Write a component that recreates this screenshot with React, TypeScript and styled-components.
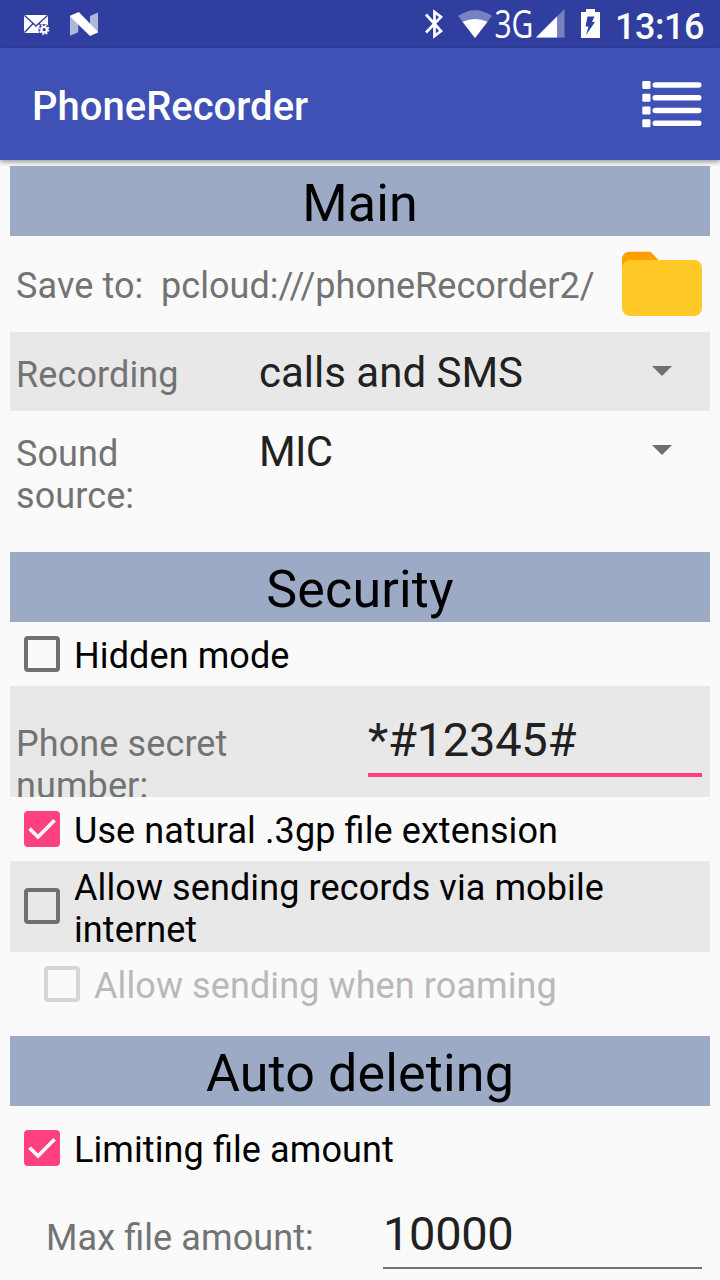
import React from "react";
import styled, { createGlobalStyle } from "styled-components";

const GlobalStyle = createGlobalStyle`
  *, *::before, *::after { box-sizing: border-box; }
  html, body { margin: 0; padding: 0; background: #fafafa; }
  body {
    font-family: Roboto, "Liberation Sans", sans-serif;
    font-feature-settings: "liga" 1;
    overflow: hidden;
  }
`;

const Screen = styled.div`
  display: flex;
  flex-direction: column;
  width: 720px;
  height: 1280px;
  overflow: hidden;
  background: #fafafa;
  color: #000;
`;

const StatusBar = styled.div`
  flex: none;
  display: flex;
  align-items: flex-start;
  justify-content: space-between;
  height: 48px;
  background: #303f9f;
  color: #fff;
`;

const StatusIcon = styled.svg`
  display: block;
  flex: none;
  overflow: visible;
`;

const Clock = styled.time`
  width: 105px;
  padding-top: 6px;
  font-size: 36px;
  font-weight: 500;
  line-height: 42px;
  letter-spacing: -0.5px;
  white-space: nowrap;
`;

const AppBar = styled.header`
  flex: none;
  position: relative;
  display: flex;
  align-items: center;
  justify-content: space-between;
  height: 112px;
  padding: 0 16px 0 32px;
  background: #3f51b5;
  box-shadow: 0 2px 5px rgba(0, 0, 0, 0.4);
`;

const Title = styled.h1`
  margin: 0;
  padding-top: 6px;
  font-size: 40px;
  font-weight: 500;
  line-height: 46px;
  color: #fff;
`;

const MenuIcon = styled.svg`
  display: block;
`;

const Content = styled.main`
  flex: none;
  display: flex;
  flex-direction: column;
  padding: 6px 10px 0;
`;

const SectionHeader = styled.h2`
  flex: none;
  height: 70px;
  margin: 0;
  padding-top: 7px;
  background: #9caac6;
  font-size: 52px;
  font-weight: 400;
  line-height: 61px;
  letter-spacing: 0.15px;
  text-align: center;
`;

const Row = styled.div<{ $height: number; $top: number; $shaded?: boolean; $left?: number }>`
  flex: none;
  display: flex;
  align-items: flex-start;
  height: ${(p) => p.$height}px;
  padding-top: ${(p) => p.$top}px;
  padding-left: ${(p) => p.$left ?? 6}px;
  padding-right: 8px;
  overflow: hidden;
  background: ${(p) => (p.$shaded ? "#e8e8e8" : "transparent")};
`;

const Label = styled.span<{ $width: number }>`
  flex: none;
  width: ${(p) => p.$width}px;
  font-size: 36px;
  line-height: 42px;
  letter-spacing: 0.1px;
  color: #737373;
`;

const PathLabel = styled(Label)`
  letter-spacing: 0.04px;
`;

const FolderIcon = styled.svg`
  display: block;
  flex: none;
  margin-left: auto;
  margin-top: -15px;
`;

const Select = styled.div<{ $tracking?: number }>`
  flex: 1;
  display: flex;
  align-items: flex-start;
  justify-content: space-between;
  margin-top: -6px;
  padding-right: 30px;
  font-size: 42px;
  line-height: 49px;
  letter-spacing: ${(p) => p.$tracking ?? 0}px;
  color: #212121;
`;

const Caret = styled.span`
  margin-top: 18px;
  border: 10px solid transparent;
  border-top-color: #6f6f6f;
  border-bottom: 0;
`;

const Field = styled.div<{ $focused?: boolean }>`
  flex: 1;
  height: ${(p) => (p.$focused ? 65 : 63)}px;
  margin-top: -11px;
  border-bottom: ${(p) => (p.$focused ? "4px solid #ff4081" : "2px solid #737373")};
  font-size: 47px;
  line-height: 56px;
  letter-spacing: ${(p) => (p.$focused ? "-0.25px" : "-0.35px")};
  color: #212121;
`;

const CheckLabel = styled.span<{ $disabled?: boolean }>`
  padding-left: 14px;
  font-size: 36px;
  line-height: 42px;
  letter-spacing: 0.1px;
  color: ${(p) => (p.$disabled ? "#b9b9b9" : "#000")};
`;

const Box = styled.span<{ $checked?: boolean; $disabled?: boolean; $offset?: number }>`
  flex: none;
  display: block;
  width: 36px;
  height: 36px;
  margin-top: ${(p) => p.$offset ?? 1}px;
  border: 4px solid ${(p) => (p.$checked ? "#ff4081" : p.$disabled ? "#d6d6d6" : "#707070")};
  border-radius: 4px;
  background: ${(p) => (p.$checked ? "#ff4081" : "transparent")};
`;

const Tick = styled.svg`
  display: block;
`;

interface CheckRowProps {
  label: string;
  height: number;
  top: number;
  left?: number;
  checked?: boolean;
  disabled?: boolean;
  shaded?: boolean;
  offset?: number;
}

function CheckRow({ label, height, top, left = 14, checked, disabled, shaded, offset }: CheckRowProps) {
  return (
    <Row $height={height} $top={top} $left={left} $shaded={shaded} role="checkbox" aria-checked={!!checked}>
      <Box $checked={checked} $disabled={disabled} $offset={offset}>
        {checked && (
          <Tick width="28" height="28" viewBox="0 0 28 28" fill="none" stroke="#fafafa" strokeWidth="3.6">
            <path d="M1.5 13.6 L10 22 L26.6 5.2" />
          </Tick>
        )}
      </Box>
      <CheckLabel $disabled={disabled}>{label}</CheckLabel>
    </Row>
  );
}

function NotificationIcons() {
  return (
    <StatusIcon width="110" height="48" viewBox="0 0 110 48">
      <rect x="24" y="15" width="24" height="18" rx="1.5" fill="#fff" />
      <path d="M24.5 15.5 L36 26 L47.5 15.5 M24.5 32.5 L33 23.5 M47.5 32.5 L39 23.5" fill="none" stroke="#303f9f" strokeWidth="1.4" />
      <circle cx="44.2" cy="29.7" r="5.8" fill="#303f9f" />
      <circle cx="44.2" cy="29.7" r="4.4" fill="none" stroke="#fff" strokeWidth="1.6" strokeDasharray="1.8 1.65" />
      <circle cx="44.2" cy="29.7" r="2.7" fill="none" stroke="#fff" strokeWidth="2.2" />
      <path d="M70 16 L78.3 24 V32.3 L70 35.7Z M98 12.6 V32 L90 24 V16Z" fill="#fff" opacity=".62" />
      <path d="M70 15.8 L78.8 12.1 L98 31.8 V32.6 L90 35.9 L70 16.5Z" fill="#fff" />
    </StatusIcon>
  );
}

function SystemIcons() {
  return (
    <StatusIcon width="195" height="48" viewBox="420 0 195 48">
      <path d="M426 14.5 L441 31 L434.5 36 V12 L441 17 L426 32.5" fill="none" stroke="#fff" strokeWidth="2.7" />
      <path d="M458 15.8 Q475 4.5 492 15.8 L475 38Z" fill="#fff" opacity=".35" />
      <path d="M462.5 21.8 Q475 16 487.5 21.8 L475 38Z" fill="#fff" />
      <text x="494.4" y="38" fill="#fff" fontFamily="Open Sans" fontSize="37.5" textLength="39" lengthAdjust="spacingAndGlyphs">3G</text>
      <path d="M564.5 9 V37.5 H536Z" fill="#fff" opacity=".35" />
      <path d="M557 16.5 V37.5 H536Z" fill="#fff" />
      <path d="M586 9 H595 V12 H600 V38 H581 V12 H586Z" fill="#fff" />
      <path d="M587.5 16.5 H594.5 L592 22 H595 L586 35 L588.5 26.5 H585.5Z" fill="#303f9f" />
    </StatusIcon>
  );
}

const StatusRight = styled.div`
  display: flex;
`;

export default function App() {
  return (
    <Screen>
      <GlobalStyle />
      <StatusBar>
        <NotificationIcons />
        <StatusRight>
          <SystemIcons />
          <Clock>13:16</Clock>
        </StatusRight>
      </StatusBar>
      <AppBar>
        <Title>PhoneRecorder</Title>
        <MenuIcon width="64" height="50" viewBox="640 79 64 50" fill="#fff">
          {[85, 97.7, 110.5, 123.2].map((y) => (
            <g key={y}>
              <rect x="642.3" y={y - 4} width="8.2" height="8" rx="1.2" />
              <rect x="652.5" y={y - 2.8} width="49" height="5.6" rx="2.8" />
            </g>
          ))}
        </MenuIcon>
      </AppBar>
      <Content>
        <SectionHeader>Main</SectionHeader>
        <Row $height={96} $top={29}>
          <Label $width={145}>Save to:</Label>
          <PathLabel $width={440}>pcloud:///phoneRecorder2/</PathLabel>
          <FolderIcon width="80" height="66" viewBox="0 0 80 66">
            <path d="M0 30 V10 Q0 1.7 8.5 1.7 H28.5 L36.5 10 V30Z" fill="#ffa000" />
            <rect x="0" y="10" width="80" height="56" rx="8" fill="#ffca28" />
          </FolderIcon>
        </Row>
        <Row $height={79} $top={22} $shaded>
          <Label $width={243}>Recording</Label>
          <Select>
            calls and SMS
            <Caret />
          </Select>
        </Row>
        <Row $height={141} $top={22}>
          <Label $width={243}>
            Sound
            <br />
            source:
          </Label>
          <Select $tracking={-0.7}>
            MIC
            <Caret />
          </Select>
        </Row>
        <SectionHeader>Security</SectionHeader>
        <CheckRow label="Hidden mode" height={64} top={13} />
        <Row $height={111} $top={37} $shaded>
          <Label $width={352}>
            Phone secret
            <br />
            number:
          </Label>
          <Field $focused>*#12345#</Field>
        </Row>
        <CheckRow label="Use natural .3gp file extension" height={64} top={13} checked />
        <CheckRow label="Allow sending records via mobile internet" height={91} top={6} offset={21} shaded />
        <CheckRow label="Allow sending when roaming" height={84} top={13} left={34} disabled />
        <SectionHeader>Auto deleting</SectionHeader>
        <CheckRow label="Limiting file amount" height={74} top={23} checked />
        <Row $height={100} $top={37} $left={36}>
          <Label $width={337}>Max file amount:</Label>
          <Field>10000</Field>
        </Row>
      </Content>
    </Screen>
  );
}
